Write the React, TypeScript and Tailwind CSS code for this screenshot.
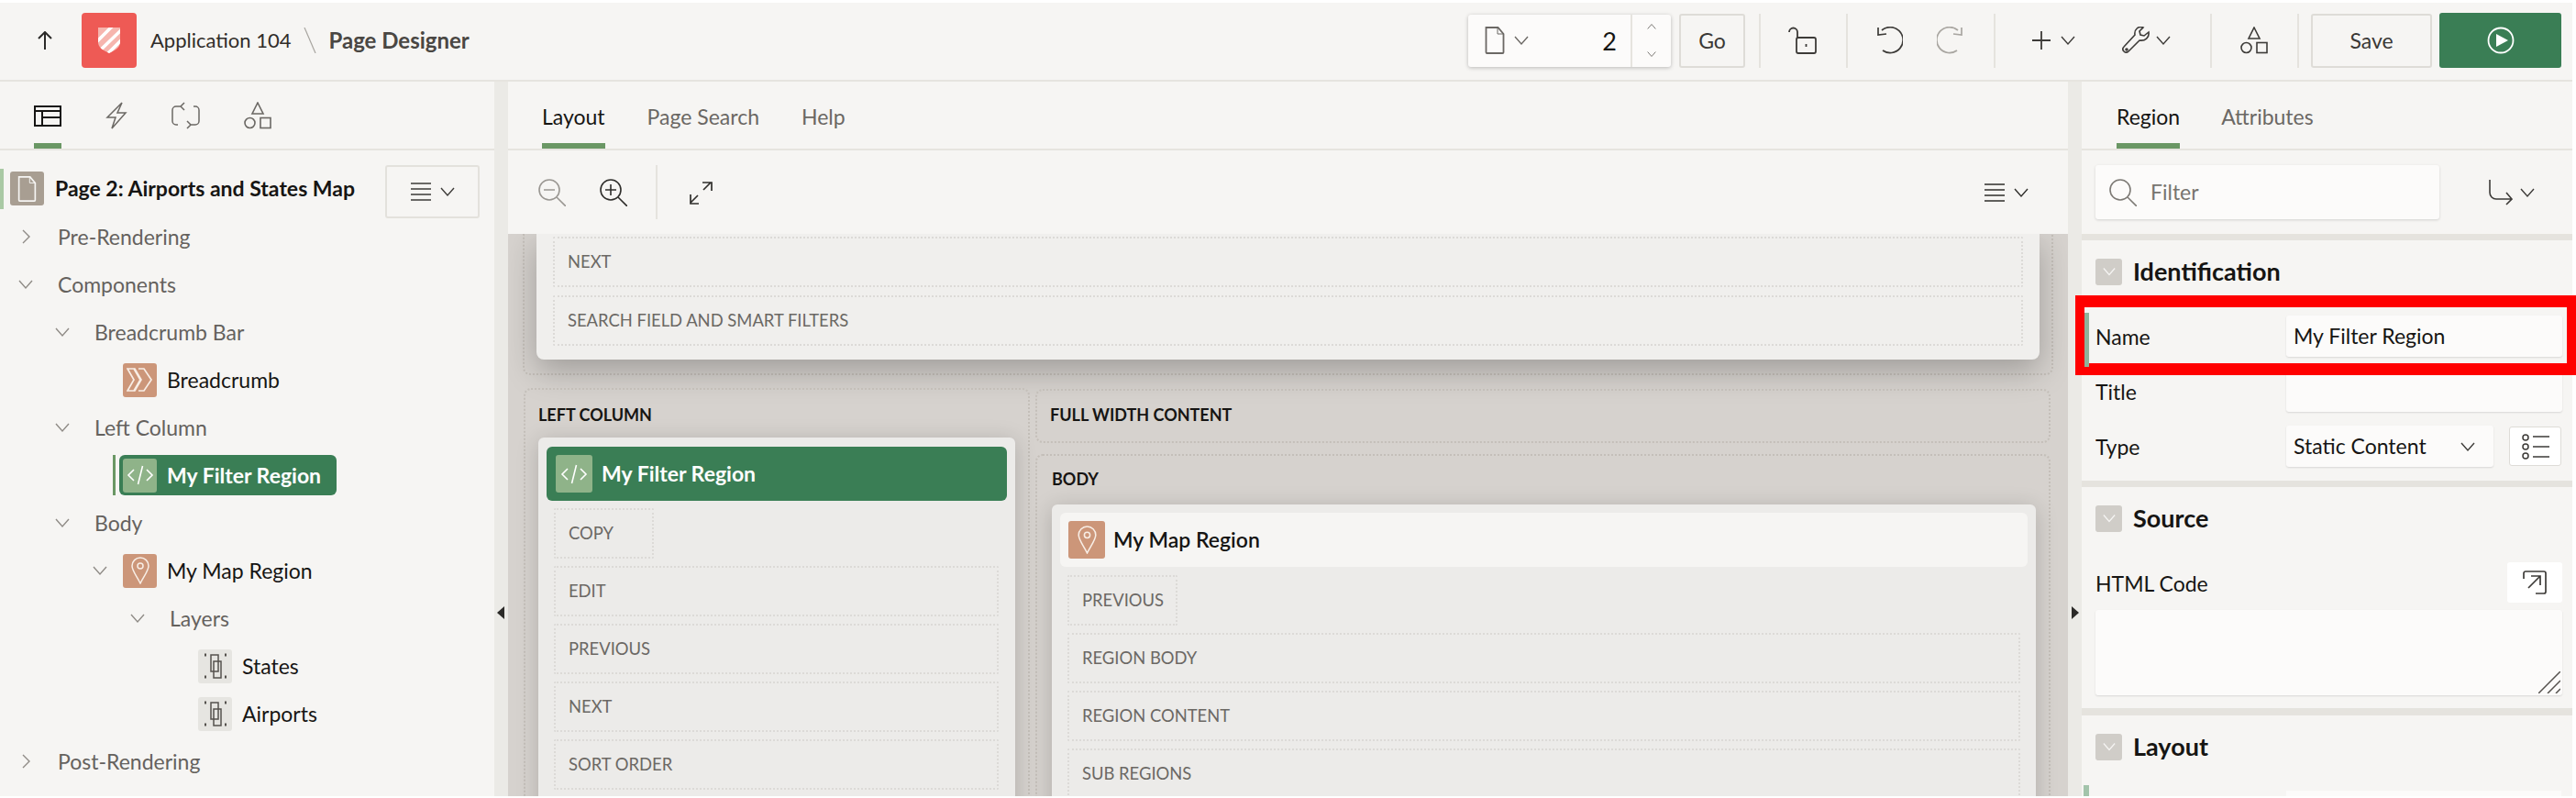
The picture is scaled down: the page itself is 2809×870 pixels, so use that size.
const Chevron = ({ dir = "down", className = "" }: { dir?: "down" | "right" | "up"; className?: string }) => (
  <svg viewBox="0 0 16 16" className={className} fill="none" stroke="currentColor" strokeWidth="1.4">
    {dir === "down" && <path d="M1 4l7 8 7-8" />}
    {dir === "up" && <path d="M1 12l7-8 7 8" />}
    {dir === "right" && <path d="M5 1l7 7-7 7" />}
  </svg>
);

const Shapes = ({ className = "" }: { className?: string }) => (
  <svg viewBox="0 0 30 30" className={className} fill="none" stroke="currentColor" strokeWidth="1.6">
    <path d="M15 1l6 12H9z" />
    <circle cx="6.5" cy="23" r="5.5" />
    <rect x="18" y="17.500" width="11" height="11" />
  </svg>
);

const MenuLines = ({ className = "" }: { className?: string }) => (
  <svg viewBox="0 0 22 20" className={className} fill="none" stroke="currentColor" strokeWidth="1.6">
    <path d="M0 1h22M0 7h22M0 13h22M0 19h22" />
  </svg>
);

const Doc = ({ className = "" }: { className?: string }) => (
  <svg viewBox="0 0 22 30" className={className} fill="none" stroke="currentColor" strokeWidth="1.8">
    <path d="M1.500 1h13l6 7v20a1 1 0 0 1-1 1h-17a1 1 0 0 1-1-1z" />
    <path d="M14 1v7h7" strokeWidth="1" />
  </svg>
);

const CodeIcon = ({ className = "" }: { className?: string }) => (
  <svg viewBox="0 0 30 24" className={className} fill="none" stroke="currentColor" strokeWidth="1.6">
    <path d="M8 6l-6 6 6 6M22 6l6 6-6 6M17.500 2l-5 20" />
  </svg>
);

const Pin = ({ className = "" }: { className?: string }) => (
  <svg viewBox="0 0 20 30" className={className} fill="none" stroke="currentColor" strokeWidth="1.5">
    <path d="M10 29C6 21 1 15 1 10a9 9 0 0 1 18 0c0 5-5 11-9 19z" />
    <circle cx="10" cy="10" r="3" />
  </svg>
);

const Crumb = ({ className = "" }: { className?: string }) => (
  <svg viewBox="0 0 30 26" className={className} fill="none" stroke="currentColor" strokeWidth="1.700">
    <path d="M1 1h8l7 12-7 12H1l7-12z" />
    <path d="M13 1h6l8 12-8 12h-6M8 1l7 12-7 12" />
  </svg>
);

const LayerIcon = () => (
  <span className="flex h-[37px] w-[37px] items-center justify-center rounded-[3px] bg-[#e6e5e1] text-[#55524e]">
    <svg viewBox="0 0 28 30" className="h-[30px] w-[28px]" fill="none" stroke="currentColor" strokeWidth="1.500">
      <rect x="9" y="3" width="8" height="18" />
      <rect x="12" y="10" width="8" height="18" />
      <path d="M2 3h2M24 3h2M2 27h2M24 27h2" strokeWidth="3" />
    </svg>
  </span>
);

const TreeRow = ({
  pl,
  chevron,
  children,
}: {
  pl: string;
  chevron?: "down" | "right";
  children: React.ReactNode;
}) => (
  <div className={`flex h-[52px] items-center ${pl}`}>
    {chevron && <Chevron dir={chevron} className="h-[16px] w-[16px] text-[#8f8b86]" />}
    {children}
  </div>
);

const Label = ({ children }: { children: React.ReactNode }) => (
  <span className="ml-[27px] text-[#65625e]">{children}</span>
);

const SlotBox = ({ children, narrow }: { children: React.ReactNode; narrow?: string }) => (
  <div className={`flex h-[55px] items-center rounded-[2px] border-2 border-dotted border-[#dcdad7] pl-[14px] text-[18.400px] text-[#6b6864] ${narrow ?? ""}`}>
    {children}
  </div>
);

const Toggle = () => (
  <span className="flex h-[29px] w-[29px] items-center justify-center rounded-[3px] bg-[#d0cdc8] text-[#f6f5f3]">
    <Chevron className="h-[14px] w-[14px]" />
  </span>
);

const SectionTitle = ({ children }: { children: React.ReactNode }) => (
  <h2 className="ml-[12px] -mt-[2px] text-[27px] font-bold">{children}</h2>
);

const Sep = () => <div className="h-[59px] w-[2px] bg-[#e5e3de]" />;

export default function App() {
  return (
    <div className="h-[870px] w-[2809px] overflow-hidden bg-white pt-[3px] pr-[4px] font-['Lato',sans-serif] text-[23px] leading-none text-[#161513]">
      {/* top bar */}
      <header className="flex h-[86px] items-center whitespace-nowrap border-b-2 border-[#e6e4df] bg-[#f6f5f3] pb-[2px] pr-[12px]">
        <svg viewBox="0 0 18 20" className="ml-[40px] h-[20px] w-[18px] text-[#2b2a28]" fill="none" stroke="currentColor" strokeWidth="2">
          <path d="M9 20V1M2 8l7-7 7 7" />
        </svg>
        <div className="ml-[31px] flex h-[60px] w-[60px] items-center justify-center rounded-[4px] bg-[#ee5a55]">
          <svg viewBox="0 0 26 30" className="h-[30px] w-[26px]">
            <defs>
              <clipPath id="shield">
                <path d="M1 1h24v16c0 6-6 9-12 12C7 26 1 23 1 17z" />
              </clipPath>
            </defs>
            <g clipPath="url(#shield)">
              <rect width="26" height="30" fill="#f6b5ae" />
              <path d="M-4 20L20-4M0 29L30 0M8 33L32 9" stroke="#fff" strokeWidth="3.500" />
            </g>
          </svg>
        </div>
        <span className="ml-[15px] text-[22px] text-[#312d2a]">Application 104</span>
        <svg viewBox="0 0 14 28" className="ml-[13px] h-[28px] w-[14px] text-[#a8a5a0]" fill="none" stroke="currentColor" strokeWidth="1.200">
          <path d="M1 0l12 28" />
        </svg>
        <span className="ml-[14px] text-[24px] font-bold text-[#4a4743]">Page Designer</span>

        <div className="ml-auto flex h-[57px] w-[221px] items-stretch rounded-[3px] bg-[#fcfbfa] shadow-[0_1px_4px_rgba(0,0,0,0.25)]">
          <div className="flex flex-1 items-center pl-[18px] text-[#6b6864]">
            <Doc className="h-[30px] w-[22px]" />
            <Chevron className="ml-[10px] h-[16px] w-[16px]" />
            <span className="ml-auto mr-[15px] text-[27px] text-[#161513]">2</span>
          </div>
          <div className="flex w-[44px] flex-col items-center justify-center gap-[20px] border-l-2 border-[#e6e4df] text-[#6b6864]">
            <Chevron dir="up" className="h-[10px] w-[14px]" />
            <Chevron className="h-[10px] w-[14px]" />
          </div>
        </div>
        <button className="ml-[9px] h-[59px] w-[72px] rounded-[3px] border-2 border-[#dedcd7] text-[#3a3835]">Go</button>
        <div className="ml-[15px]"><Sep /></div>
        <svg viewBox="0 0 31 30" className="ml-[30px] h-[30px] w-[31px] text-[#3d3b38]" fill="none" stroke="currentColor" strokeWidth="1.800">
          <rect x="9" y="12" width="21" height="17" rx="2" />
          <path d="M10 12V6a4.500 4.500 0 0 0-9 0" />
          <path d="M19.500 19v3" />
        </svg>
        <div className="ml-[32px]"><Sep /></div>
        <svg viewBox="0 0 28 30" className="ml-[32px] h-[30px] w-[28px] text-[#3d3b38]" fill="none" stroke="currentColor" strokeWidth="1.700">
          <path d="M5 4a14 14 0 1 1 1 22M1 1l0 8 9-1" />
        </svg>
        <svg viewBox="0 0 28 30" className="ml-[37px] h-[30px] w-[28px] text-[#a9a6a1]" fill="none" stroke="currentColor" strokeWidth="1.700">
          <path d="M23 4a14 14 0 1 0-1 22M27 1v8l-9-1" />
        </svg>
        <div className="ml-[34px]"><Sep /></div>
        <svg viewBox="0 0 20 20" className="ml-[40px] h-[20px] w-[20px] text-[#3d3b38]" fill="none" stroke="currentColor" strokeWidth="1.800">
          <path d="M10 0v20M0 10h20" />
        </svg>
        <Chevron className="ml-[11px] h-[16px] w-[16px] text-[#3d3b38]" />
        <svg viewBox="0 0 30 30" className="ml-[51px] h-[30px] w-[30px] text-[#3d3b38]" fill="none" stroke="currentColor" strokeWidth="1.600">
          <path d="M29 6l-5 4-4-1-1-4 4-4c-5-2-10 2-9 8L2 22c-2 2-1 4 0 5 2 2 4 1 5 0l12-12c6 1 11-3 10-9z" />
          <circle cx="5" cy="25" r="1" />
        </svg>
        <Chevron className="ml-[7px] h-[16px] w-[16px] text-[#3d3b38]" />
        <div className="ml-[43px]"><Sep /></div>
        <Shapes className="ml-[31px] h-[30px] w-[30px] text-[#3d3b38]" />
        <div className="ml-[32px]"><Sep /></div>
        <button className="ml-[13px] h-[59px] w-[132px] rounded-[3px] border-2 border-[#dedcd7] text-[#3a3835]">Save</button>
        <button className="ml-[8px] flex h-[60px] w-[133px] items-center justify-center rounded-[3px] bg-[#3a7e55]">
          <svg viewBox="0 0 30 30" className="h-[30px] w-[30px]">
            <circle cx="15" cy="15" r="13.500" fill="none" stroke="#fff" strokeWidth="1.800" />
            <path d="M10 8l13 7-13 7z" fill="#fff" />
          </svg>
        </button>
      </header>

      <main className="flex h-[779px] bg-[#f6f5f3]">
        {/* left panel */}
        <aside className="w-[539px] shrink-0">
          <div className="flex h-[75px] items-end gap-[48px] border-b-2 border-[#e6e4df] pl-[37px] text-[#6b6864]">
            <div className="flex h-[73px] flex-col items-center justify-between">
              <svg viewBox="0 0 30 23" className="mt-[26px] h-[23px] w-[30px] text-[#161513]" fill="none" stroke="currentColor" strokeWidth="2">
                <rect x="1" y="1" width="28" height="21" />
                <path d="M1 6h28M9 6v16M9 13h20" />
              </svg>
              <span className="h-[6px] w-[30px] bg-[#6a9764]" />
            </div>
            <svg viewBox="0 0 24 30" className="mb-[21px] h-[30px] w-[24px]" fill="none" stroke="currentColor" strokeWidth="1.500">
              <path d="M18 1L2 17h9L7 29l15-17h-9z" />
            </svg>
            <svg viewBox="0 0 31 30" className="mb-[21px] h-[30px] w-[31px]" fill="none" stroke="currentColor" strokeWidth="1.500">
              <path d="M10 5H5a4 4 0 0 0-4 4v12a4 4 0 0 0 4 4h2M21 25h5a4 4 0 0 0 4-4V9a4 4 0 0 0-4-4h-2M14 1l-4 4 4 4M17 21l4 4-4 4" />
            </svg>
            <Shapes className="mb-[21px] h-[30px] w-[30px]" />
          </div>

          <div className="flex h-[68px] items-start pt-[16px]">
            <span className="mt-[4px] h-[44px] w-[4px] bg-[#a9c9a4]" />
            <span className="ml-[7px] mt-[7px] flex h-[37px] w-[37px] items-center justify-center rounded-[3px] bg-[#a89e92] text-[#f6f5f3]">
              <Doc className="h-[28px] w-[21px]" />
            </span>
            <span className="ml-[12px] mt-[14px] font-bold">Page 2: Airports and States Map</span>
            <button className="ml-auto mr-[16px] flex h-[58px] w-[103px] items-center justify-center gap-[10px] rounded-[3px] border-2 border-[#e3e1dc] text-[#3d3b38]">
              <MenuLines className="h-[20px] w-[22px]" />
              <Chevron className="h-[16px] w-[16px]" />
            </button>
          </div>

          <div>
            <TreeRow pl="pl-[20px]" chevron="right"><Label>Pre-Rendering</Label></TreeRow>
            <TreeRow pl="pl-[20px]" chevron="down"><Label>Components</Label></TreeRow>
            <TreeRow pl="pl-[60px]" chevron="down"><Label>Breadcrumb Bar</Label></TreeRow>
            <TreeRow pl="pl-[134px]">
              <span className="flex h-[37px] w-[37px] items-center justify-center rounded-[3px] bg-[#cc9679] text-[#f8eee6]">
                <Crumb className="h-[26px] w-[30px]" />
              </span>
              <span className="ml-[11px]">Breadcrumb</span>
            </TreeRow>
            <TreeRow pl="pl-[60px]" chevron="down"><Label>Left Column</Label></TreeRow>
            <TreeRow pl="pl-[123px]">
              <span className="h-[44px] w-[3px] bg-[#6a9764]" />
              <div className="ml-[4px] flex h-[44px] w-[237px] items-center rounded-[6px] bg-[#3a7e55] pl-[4px] font-bold text-white">
                <span className="flex h-[37px] w-[37px] items-center justify-center rounded-[3px] bg-[#8fb389]">
                  <CodeIcon className="h-[24px] w-[30px]" />
                </span>
                <span className="ml-[11px]">My Filter Region</span>
              </div>
            </TreeRow>
            <TreeRow pl="pl-[60px]" chevron="down"><Label>Body</Label></TreeRow>
            <TreeRow pl="pl-[101px]" chevron="down">
              <span className="ml-[17px] flex h-[37px] w-[37px] items-center justify-center rounded-[3px] bg-[#cc9679] text-[#f8eee6]">
                <Pin className="h-[30px] w-[20px]" />
              </span>
              <span className="ml-[11px]">My Map Region</span>
            </TreeRow>
            <TreeRow pl="pl-[142px]" chevron="down"><Label>Layers</Label></TreeRow>
            <TreeRow pl="pl-[216px]">
              <LayerIcon />
              <span className="ml-[11px]">States</span>
            </TreeRow>
            <TreeRow pl="pl-[216px]">
              <LayerIcon />
              <span className="ml-[11px]">Airports</span>
            </TreeRow>
            <TreeRow pl="pl-[20px]" chevron="right"><Label>Post-Rendering</Label></TreeRow>
          </div>
        </aside>

        {/* left splitter */}
        <div className="flex w-[15px] shrink-0 items-center bg-[#ebeae6]">
          <span className="ml-[3px] mt-[379px] h-0 w-0 border-y-[7px] border-r-[8px] border-y-transparent border-r-[#2b2a28]" />
        </div>

        {/* center panel */}
        <section className="flex w-[1701px] shrink-0 flex-col">
          <div className="flex h-[75px] gap-[46px] border-b-2 border-[#e6e4df] pl-[37px] pt-[27px] text-[#6b6864]">
            <div className="flex flex-col justify-between">
              <span className="text-[#161513]">Layout</span>
              <span className="h-[6px] w-full bg-[#6a9764]" />
            </div>
            <span>Page Search</span>
            <span>Help</span>
          </div>
          <div className="flex h-[91px] items-center pl-[33px] pr-[40px] text-[#2f2e2b]">
            <svg viewBox="0 0 30 30" className="h-[30px] w-[30px] text-[#9a9792]" fill="none" stroke="currentColor" strokeWidth="1.600">
              <circle cx="12" cy="12" r="11" />
              <path d="M20 20l10 10M6 12h12" />
            </svg>
            <svg viewBox="0 0 30 30" className="ml-[37px] h-[30px] w-[30px]" fill="none" stroke="currentColor" strokeWidth="1.600">
              <circle cx="12" cy="12" r="11" />
              <path d="M20 20l10 10M6 12h12M12 6v12" />
            </svg>
            <div className="ml-[31px]"><Sep /></div>
            <svg viewBox="0 0 26 26" className="ml-[34px] h-[26px] w-[26px]" fill="none" stroke="currentColor" strokeWidth="1.700">
              <path d="M2 24L10 16M16 10L24 2M15 2h10v9M2 15v10h9" />
            </svg>
            <div className="ml-auto mr-[3px] flex items-center gap-[10px]">
              <MenuLines className="h-[20px] w-[22px]" />
              <Chevron className="h-[16px] w-[16px]" />
            </div>
          </div>

          {/* canvas */}
          <div className="flex-1 overflow-hidden bg-[#d6d2ce] px-[16px]">
            <div className="h-[154px] rounded-b-[8px] border-x-2 border-b-2 border-dotted border-[#c4bfb9] px-[13px]">
              <div className="h-[137px] rounded-b-[8px] bg-[#f0efed] px-[18px] pt-[3px] shadow-[0_12px_34px_rgba(0,0,0,0.26)]">
                <SlotBox>NEXT</SlotBox>
                <div className="mt-[9px]"><SlotBox>SEARCH FIELD AND SMART FILTERS</SlotBox></div>
              </div>
            </div>
            <div className="mt-[14px] flex gap-[6px]">
              <div className="ml-[1px] h-[600px] w-[552px] shrink-0 rounded-[8px] border-2 border-dotted border-[#c4bfb9] px-[14px] pt-[18px]">
                <h3 className="text-[18px] font-bold">LEFT COLUMN</h3>
                <div className="mt-[16px] h-[500px] rounded-[6px] bg-[#ecebe9] px-[9px] pt-[10px] shadow-[0_4px_24px_rgba(0,0,0,0.18)]">
                  <div className="flex h-[59px] items-center rounded-[6px] bg-[#3a7e55] pl-[10px] font-bold text-white">
                    <span className="flex h-[41px] w-[40px] items-center justify-center rounded-[3px] bg-[#8fb389]">
                      <CodeIcon className="h-[24px] w-[30px]" />
                    </span>
                    <span className="ml-[10px]">My Filter Region</span>
                  </div>
                  <div className="ml-[8px] mr-[9px] mt-[8px] flex flex-col gap-[8px]">
                    <SlotBox narrow="w-[109px]">COPY</SlotBox>
                    <SlotBox>EDIT</SlotBox>
                    <SlotBox>PREVIOUS</SlotBox>
                    <SlotBox>NEXT</SlotBox>
                    <SlotBox>SORT ORDER</SlotBox>
                  </div>
                </div>
              </div>
              <div className="mt-[1px] w-[1107px] shrink-0">
                <div className="h-[59px] rounded-[8px] border-2 border-dotted border-[#c4bfb9] pl-[14px] pt-[17px]">
                  <h3 className="text-[18px] font-bold">FULL WIDTH CONTENT</h3>
                </div>
                <div className="mt-[12px] h-[500px] rounded-[8px] border-2 border-dotted border-[#c4bfb9] pl-[16px] pr-[14px] pt-[16px]">
                  <h3 className="text-[18px] font-bold">BODY</h3>
                  <div className="mt-[19px] h-[400px] rounded-[6px] bg-[#ecebe9] px-[9px] pt-[9px] shadow-[0_4px_24px_rgba(0,0,0,0.18)]">
                    <div className="flex h-[59px] items-center rounded-[6px] bg-[#f6f5f3] pl-[9px]">
                      <span className="flex h-[41px] w-[40px] items-center justify-center rounded-[3px] bg-[#cc9679] text-[#f8eee6]">
                        <Pin className="h-[31px] w-[21px]" />
                      </span>
                      <span className="ml-[9px] font-semibold">My Map Region</span>
                    </div>
                    <div className="mx-[8px] mt-[9px] flex flex-col gap-[8px]">
                      <SlotBox narrow="w-[120px]">PREVIOUS</SlotBox>
                      <SlotBox>REGION BODY</SlotBox>
                      <SlotBox>REGION CONTENT</SlotBox>
                      <SlotBox>SUB REGIONS</SlotBox>
                    </div>
                  </div>
                </div>
              </div>
            </div>
          </div>
        </section>

        {/* right splitter */}
        <div className="flex w-[15px] shrink-0 items-center bg-[#ebeae6]">
          <span className="ml-[4px] mt-[379px] h-0 w-0 border-y-[7px] border-l-[8px] border-y-transparent border-l-[#2b2a28]" />
        </div>

        {/* property panel */}
        <aside className="relative flex-1">
          <div className="flex h-[75px] gap-[45px] border-b-2 border-[#e6e4df] pl-[38px] pt-[27px] text-[#6b6864]">
            <div className="flex flex-col justify-between">
              <span className="text-[#161513]">Region</span>
              <span className="h-[6px] w-full bg-[#6a9764]" />
            </div>
            <span>Attributes</span>
          </div>
          <div className="flex h-[91px] items-center pl-[15px]">
            <div className="flex h-[59px] w-[375px] items-center rounded-[3px] bg-[#fcfbfa] pl-[15px] text-[#77746f] shadow-[0_1px_3px_rgba(0,0,0,0.15)]">
              <svg viewBox="0 0 30 30" className="h-[30px] w-[30px] text-[#7d7a75]" fill="none" stroke="currentColor" strokeWidth="1.600">
                <circle cx="12" cy="12" r="11" />
                <path d="M20 20l10 10" />
              </svg>
              <span className="ml-[15px]">Filter</span>
            </div>
            <svg viewBox="0 0 26 28" className="ml-[54px] h-[28px] w-[26px] text-[#3d3b38]" fill="none" stroke="currentColor" strokeWidth="1.600">
              <path d="M1 0v14a7 7 0 0 0 7 7h17M19 14l6 7-6 6" />
            </svg>
            <Chevron className="ml-[8px] h-[16px] w-[16px] text-[#3d3b38]" />
          </div>

          <div className="h-[7px] bg-[#e5e3de]" />

          <div className="pl-[15px] pr-[11px]">
            <div className="flex h-[60px] items-center pt-[8px]">
              <Toggle />
              <SectionTitle>Identification</SectionTitle>
            </div>
            <div className="grid grid-cols-[208px_1fr] items-center">
              <span className="mt-[24px]">Name</span>
              <div className="mt-[22px] flex h-[45px] items-center rounded-[3px] bg-[#fcfbfa] pl-[8px] shadow-[0_1px_2px_rgba(0,0,0,0.12)]">My Filter Region</div>
              <span className="mt-[16px]">Title</span>
              <div className="mt-[15px] h-[45px] rounded-[3px] bg-[#fcfbfa] shadow-[0_1px_2px_rgba(0,0,0,0.12)]" />
              <span className="mt-[16px]">Type</span>
              <div className="mt-[15px] flex items-center gap-[17px]">
                <div className="flex h-[45px] w-[226px] items-center rounded-[3px] bg-[#fcfbfa] pl-[8px] shadow-[0_1px_2px_rgba(0,0,0,0.12)]">
                  Static Content
                  <Chevron className="ml-auto mr-[20px] h-[16px] w-[16px] text-[#3d3b38]" />
                </div>
                <div className="flex h-[43px] w-[57px] items-center justify-center rounded-[3px] border border-[#dedcd7] bg-white text-[#3d3b38]">
                  <svg viewBox="0 0 30 28" className="h-[28px] w-[30px]" fill="none" stroke="currentColor" strokeWidth="1.500">
                    <circle cx="4" cy="4" r="3" />
                    <circle cx="4" cy="14" r="3" />
                    <circle cx="4" cy="24" r="3" />
                    <path d="M12 3h18M12 14h18M12 25h18" />
                  </svg>
                </div>
              </div>
            </div>
          </div>

          <div className="mt-[15px] h-[7px] bg-[#e5e3de]" />

          <div className="pl-[15px] pr-[11px]">
            <div className="flex h-[60px] items-center pt-[8px]">
              <Toggle />
              <SectionTitle>Source</SectionTitle>
            </div>
            <div className="mt-[22px] flex items-center justify-between">
              <span className="mt-[2px]">HTML Code</span>
              <div className="flex h-[44px] w-[60px] items-center justify-center rounded-[3px] bg-white text-[#3d3b38]">
                <svg viewBox="0 0 26 26" className="h-[26px] w-[26px]" fill="none" stroke="currentColor" strokeWidth="1.700">
                  <path d="M1 9V3a2 2 0 0 1 2-2h20a2 2 0 0 1 2 2v20a2 2 0 0 1-2 2h-9M6 19L19 6M9 6h10v10" />
                </svg>
              </div>
            </div>
            <div className="relative mt-[8px] h-[93px] rounded-[3px] bg-[#fcfbfa] shadow-[0_1px_2px_rgba(0,0,0,0.12)]">
              <svg viewBox="0 0 24 24" className="absolute bottom-[2px] right-[2px] h-[24px] w-[24px] text-[#55524e]" fill="none" stroke="currentColor" strokeWidth="1.500">
                <path d="M0 24L24 0M10 24L24 10M19 24l5-5" />
              </svg>
            </div>
          </div>

          <div className="mt-[14px] h-[8px] bg-[#e5e3de]" />

          <div className="pl-[15px] pr-[11px]">
            <div className="flex h-[60px] items-center pt-[8px]">
              <Toggle />
              <SectionTitle>Layout</SectionTitle>
            </div>
          </div>
          <div className="ml-[2px] mt-[16px] flex items-start">
            <span className="h-[12px] w-[6px] bg-[#a3c4ab]" />
            <span className="ml-[215px] mt-[6px] h-[6px] w-[300px] bg-[#fcfbfa]" />
          </div>

          {/* callout */}
          <div className="absolute left-[-7px] top-[233px] h-[87px] w-[546px] border-x-[10px] border-y-[13px] border-[#ff0000]">
            <span className="absolute left-0 top-[6px] h-[59px] w-[5px] bg-[#8fb39a]" />
          </div>
        </aside>
      </main>
    </div>
  );
}
